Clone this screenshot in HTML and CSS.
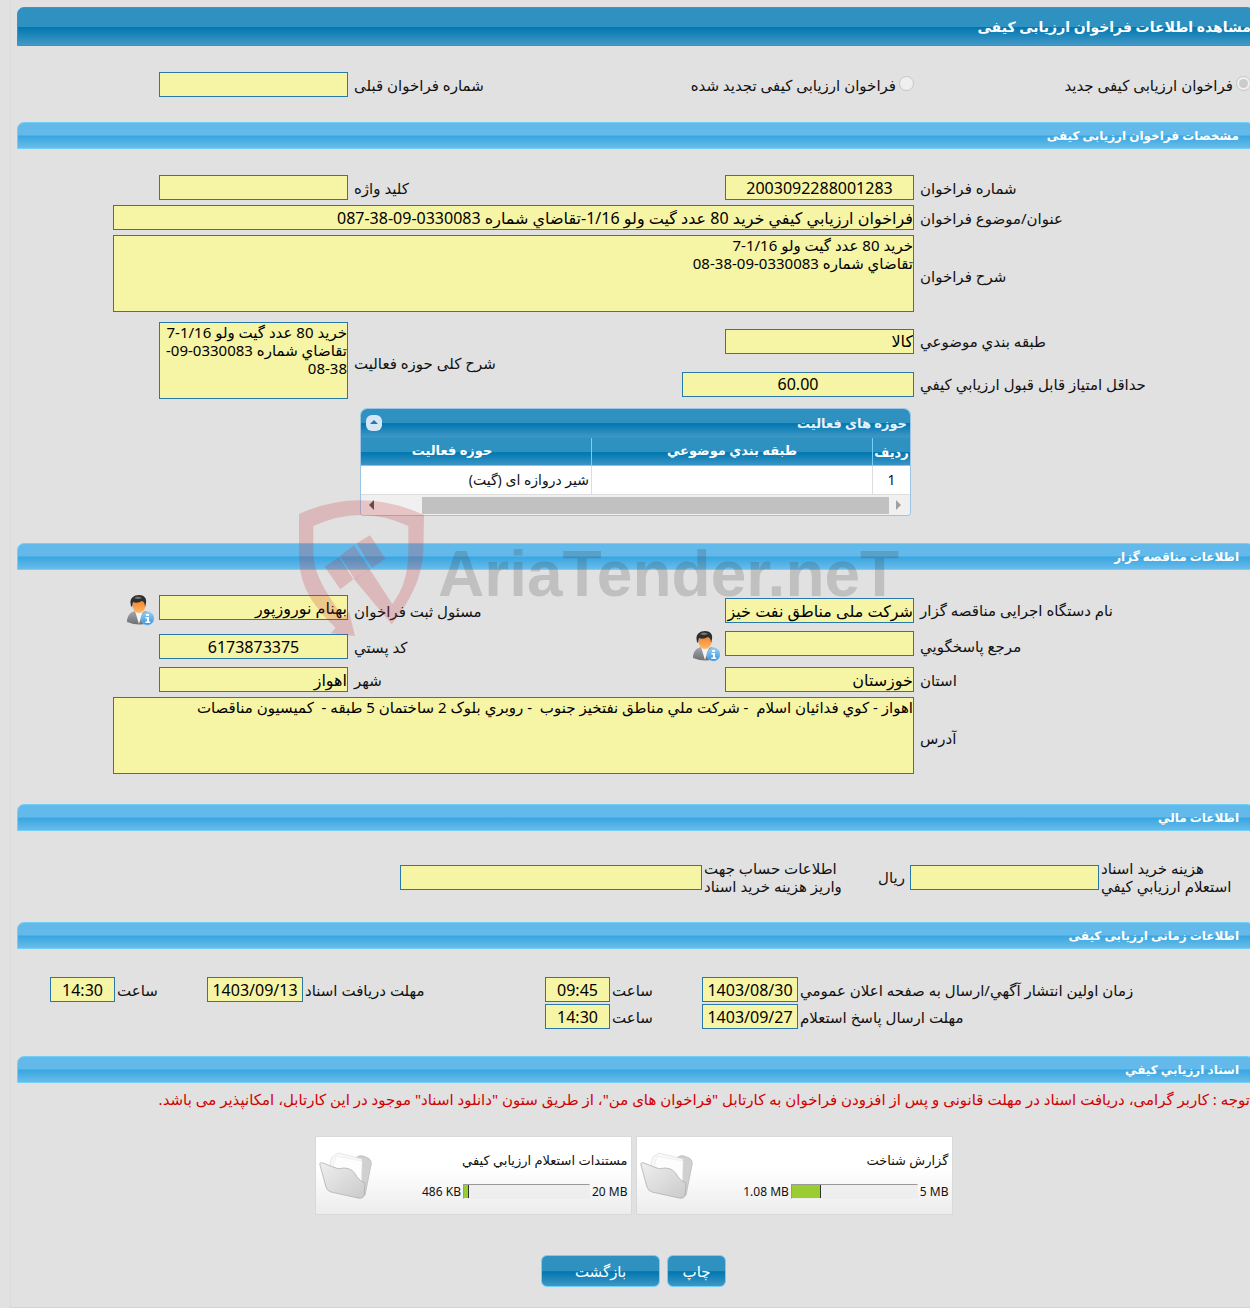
FILE: index.html
```html
<!DOCTYPE html>
<html lang="fa" dir="rtl">
<head>
<meta charset="utf-8">
<title>مشاهده اطلاعات فراخوان ارزیابی کیفی</title>
<link rel="stylesheet" href="styles.css">
</head>
<body>
<svg class="defs" aria-hidden="true">
  <defs>
    <linearGradient id="suit" x1="0" y1="0" x2="0" y2="1"><stop offset="0" stop-color="#a5a8ab"/><stop offset="1" stop-color="#6c6f73"/></linearGradient>
    <linearGradient id="face" x1="0" y1="0" x2="0" y2="1"><stop offset="0" stop-color="#f47a22"/><stop offset="1" stop-color="#ffb765"/></linearGradient>
    <linearGradient id="info" x1="0" y1="0" x2="0" y2="1"><stop offset="0" stop-color="#9cd0f5"/><stop offset="1" stop-color="#2b93e6"/></linearGradient>
    <linearGradient id="front" x1="0" y1="0" x2="1" y2="1"><stop offset="0" stop-color="#efefef"/><stop offset="1" stop-color="#cacaca"/></linearGradient>
    <symbol id="person" viewBox="0 0 28 31">
      <path d="M1 27C1 20 5 17 9 16L14 19 19 16C24 17 26 20 26 27Q14 32 1 27Z" fill="url(#suit)"/>
      <path d="M9 16L13 29 17 16Z" fill="#f4f4f4"/>
      <ellipse cx="13" cy="10.500" rx="6.500" ry="7.500" fill="url(#face)"/>
      <path d="M4.500 8C4 3 8 0 13 0 18 0 21 3 20 8L19 12Q19 7 16 6 11 9 7 7L6 12Q4.500 11 4.500 8Z" fill="#2e2e2e"/>
      <path d="M8 3Q12 0 16 3Q12 5 8 3Z" fill="#777"/>
      <circle cx="21.500" cy="23.500" r="6.500" fill="url(#info)" stroke="#82bdea" stroke-width=".6"/>
      <path d="M20 19h3v2h-3zM19.500 22H23v4.500h1.300V28h-5v-1.500H21v-3h-1.500z" fill="#fff"/>
    </symbol>
    <symbol id="folder" viewBox="0 0 54 48">
      <path d="M30 12L38 5Q41 3 44 4L49 6Q53 8 52 13L46 43 40 46Z" fill="#d0d0d0" stroke="#b5b5b5" stroke-width=".7"/>
      <path d="M11 12L13 5 19 1 43 7 42 34 16 28Z" fill="#f9f9f9" stroke="#dcdcdc" stroke-width=".7"/>
      <path d="M14 14L17 4 43 9 42 36Z" fill="#fdfdfd" stroke="#e2e2e2" stroke-width=".5"/>
      <path d="M1 13Q0 10 4 11L14 15Q19 18 25 16 34 16 38 25 41 29 46 31L45 44Q44 47 39 46L12 40Q8 39 7 35Z" fill="url(#front)" stroke="#b0b0b0" stroke-width=".8"/>
    </symbol>
  </defs>
</svg>

<main class="panel">
  <h1 class="title-bar">مشاهده اطلاعات فراخوان ارزیابی کیفی</h1>

  <form class="form">
    <div class="kind">
      <label class="radio"><input type="radio" name="kind" checked disabled><span>فراخوان ارزیابی کیفی جدید</span></label>
      <label class="radio"><input type="radio" name="kind" disabled><span>فراخوان ارزیابی کیفی تجدید شده</span></label>
      <label class="lbl" for="prev">شماره فراخوان قبلی</label>
      <input class="box std" id="prev" readonly>
    </div>

    <h2 class="bar">مشخصات فراخوان ارزیابی کیفی</h2>
    <div class="fields">
      <label class="lbl" for="num">شماره فراخوان</label>
      <input class="box std num" id="num" value="2003092288001283" readonly>
      <label class="lbl" for="key">کلید واژه</label>
      <input class="box std" id="key" readonly>

      <label class="lbl" for="subject">عنوان/موضوع فراخوان</label>
      <input class="box long" id="subject" value="فراخوان ارزيابي کيفي خريد 80 عدد گيت ولو 1/16-تقاضاي شماره 0330083-09-38-087" readonly>

      <label class="lbl tall" for="desc">شرح فراخوان</label>
      <textarea class="box long area" id="desc" readonly>خريد 80 عدد گيت ولو 1/16-7
تقاضاي شماره 0330083-09-38-08</textarea>

      <label class="lbl mid" for="cat">طبقه بندي موضوعي</label>
      <input class="box std" id="cat" value="کالا" readonly>
      <label class="lbl two" for="scope">شرح کلی حوزه فعالیت</label>
      <textarea class="box std area two" id="scope" readonly>خريد 80 عدد گيت ولو 1/16-7
تقاضاي شماره 0330083-09-38-08</textarea>

      <label class="lbl mid" for="score">حداقل امتیاز قابل قبول ارزيابي کیفي</label>
      <input class="box score num" id="score" value="60.00" readonly>

      <section class="activity">
        <header class="activity-head">
          <span>حوزه های فعالیت</span>
          <button class="fold" type="button" aria-label="بستن"><svg width="16" height="16" viewBox="0 0 16 16"><rect width="16" height="16" rx="6" fill="#d7e6f6"/><path d="M4 9L8 5l4 4z" fill="#1c7bb0"/></svg></button>
        </header>
        <table>
          <thead><tr><th class="c-row">ردیف</th><th class="c-cat">طبقه بندي موضوعي</th><th class="c-act">حوزه فعالیت</th></tr></thead>
          <tbody><tr><td class="center">1</td><td></td><td>شیر دروازه ای (گیت)</td></tr></tbody>
        </table>
        <div class="scroll">
          <svg width="6" height="10" viewBox="0 0 6 10"><path d="M0 0l5 5-5 5z" fill="#a0a0a0"/></svg>
          <span class="thumb"></span>
          <svg width="6" height="10" viewBox="0 0 6 10"><path d="M6 0L1 5l5 5z" fill="#505050"/></svg>
        </div>
      </section>
    </div>

    <h2 class="bar">اطلاعات مناقصه گزار</h2>
    <div class="fields contact">
      <label class="lbl person-row" for="org">نام دستگاه اجرایی مناقصه گزار</label>
      <input class="box std" id="org" value="شرکت ملی مناطق نفت خیز جنوب" readonly>
      <label class="lbl" for="reg">مسئول ثبت فراخوان</label>
      <div class="with-icon"><input class="box std" id="reg" value="بهنام نوروزپور" readonly><svg class="person"><use href="#person"/></svg></div>

      <label class="lbl person-row" for="ref">مرجع پاسخگويي</label>
      <div class="with-icon"><input class="box std" id="ref" readonly><svg class="person"><use href="#person"/></svg></div>
      <label class="lbl" for="zip">کد پستي</label>
      <input class="box std num" id="zip" value="6173873375" readonly>

      <label class="lbl" for="prov">استان</label>
      <input class="box std" id="prov" value="خوزستان" readonly>
      <label class="lbl" for="city">شهر</label>
      <input class="box std" id="city" value="اهواز" readonly>

      <label class="lbl tall" for="addr">آدرس</label>
      <textarea class="box long area" id="addr" readonly>اهواز - کوي فدائيان اسلام  - شرکت ملي مناطق نفتخيز جنوب  - روبري بلوک 2 ساختمان 5 طبقه -  کميسيون مناقصات</textarea>
    </div>

    <h2 class="bar">اطلاعات مالي</h2>
    <div class="money">
      <label for="fee"><span>هزينه خريد اسناد</span>استعلام ارزيابي کيفي</label>
      <input class="box" id="fee" readonly>
      <span class="unit">ریال</span>
      <label for="acc"><span>اطلاعات حساب جهت</span>واريز هزينه خريد اسناد</label>
      <input class="box" id="acc" readonly>
    </div>

    <h2 class="bar">اطلاعات زمانی ارزیابی کیفی</h2>
    <div class="times">
      <label for="d1">زمان اولین انتشار آگهي/ارسال به صفحه اعلان عمومي</label>
      <input class="box num" id="d1" value="1403/08/30" readonly>
      <label for="t1">ساعت</label>
      <input class="box num" id="t1" value="09:45" readonly>
      <label for="d2">مهلت دریافت اسناد</label>
      <input class="box num" id="d2" value="1403/09/13" readonly>
      <label for="t2">ساعت</label>
      <input class="box num" id="t2" value="14:30" readonly>
      <label for="d3">مهلت ارسال پاسخ استعلام</label>
      <input class="box num" id="d3" value="1403/09/27" readonly>
      <label for="t3">ساعت</label>
      <input class="box num" id="t3" value="14:30" readonly>
    </div>

    <h2 class="bar">اسناد ارزيابي کيفي</h2>
    <p class="note">توجه : کاربر گرامی، دریافت اسناد در مهلت قانونی و پس از افزودن فراخوان به کارتابل "فراخوان های من"، از طریق ستون "دانلود اسناد" موجود در این کارتابل، امکانپذیر می باشد.</p>

    <div class="cards">
      <article class="card">
        <div class="card-text">
          <span>گزارش شناخت</span>
          <div class="usage"><bdi>5 MB</bdi><div class="meter"><div class="used" style="width:23%"></div></div><bdi>1.08 MB</bdi></div>
        </div>
        <svg class="folder"><use href="#folder"/></svg>
      </article>
      <article class="card">
        <div class="card-text">
          <span>مستندات استعلام ارزیابي کیفي</span>
          <div class="usage"><bdi>20 MB</bdi><div class="meter"><div class="used" style="width:4%"></div></div><bdi>486 KB</bdi></div>
        </div>
        <svg class="folder"><use href="#folder"/></svg>
      </article>
    </div>

    <div class="actions">
      <button class="btn" type="button">چاپ</button>
      <button class="btn wide" type="button">بازگشت</button>
    </div>
  </form>
</main>

<div class="watermark" dir="ltr">
  <svg width="127" height="141" viewBox="18 24 381 423">
    <path d="M18 72Q204 -12 393 75L391 180C388 265 350 335 296 403L183 268 230 238 298 342C330 300 346 250 346 180V108Q204 42 61 108V190C62 260 110 320 150 382L168 366 186 438 113 430 128 413C50 340 18 280 18 190Z"/>
    <path d="M191 160l40-24 46 70-40 28zM141 198l42-32 48 72-46 30zM95 230l43-29 43 67-39 30z"/>
  </svg>
  <span>AriaTender.neT</span>
</div>
</body>
</html>
```
FILE: styles.css
```css
* { box-sizing: border-box; }

body {
  margin: 0;
  position: relative;
  overflow-x: hidden;
  background: #e1e1e1;
  color: #111;
  font: 15px/18px "Noto Sans", "DejaVu Sans", sans-serif;
}

.defs { position: absolute; width: 0; height: 0; }

.panel {
  margin: 0 -4px 0 10px;
  padding: 7px 0 20px 6px;
  border-left: 1px solid #dadada;
  border-bottom: 1px solid #d4d4d4;
}

h1, h2, p { margin: 0; }

.title-bar {
  height: 39px;
  padding: 0 2px;
  border: 1px solid #3594d0;
  border-radius: 7px 7px 0 0;
  background: linear-gradient(#2f91bf 0 50%, #0077b0 52%, #4299c6);
  color: #fff;
  font-size: 14px;
  line-height: 37px;
}

.bar {
  height: 27px;
  padding: 0 14px;
  border: 1px solid #72d0f8;
  border-radius: 7px 7px 0 0;
  background: linear-gradient(#63baea 0 48%, #38a6e1 52%, #68bcea);
  color: #fff;
  font-size: 12px;
  line-height: 26px;
}

.box {
  height: 25px;
  width: 100%;
  min-width: 0;
  margin: 0;
  padding: 0;
  border: 1px solid #2878aa;
  border-radius: 0;
  background: #f6f4a5;
  color: #000;
  font: 16px/22px "Noto Sans", "DejaVu Sans", sans-serif;
  outline: none;
}

.num { text-align: center; }
.std { width: 189px; }
.score { width: 232px; }
.long { width: 801px; grid-column: 2 / -1; }

.area {
  height: 77px;
  align-self: start;
  resize: none;
  overflow: hidden;
  font-size: 15px;
  line-height: 18px;
}

.lbl { padding-left: 6px; text-align: left; }

.kind, .fields {
  display: grid;
  grid-template-columns: 340fr 414fr 152fr 331fr;
  align-items: center;
}

.kind { padding: 26px 0 25px; }
.radio { display: flex; gap: 3px; }
.radio input { width: 15px; height: 15px; margin: 0; }
.kind .radio:first-child { padding-right: 3px; }

.fields { padding: 26px 0 27px; row-gap: 5px; }
.fields.contact { padding: 25px 0; }
.tall { line-height: 82px; }
.mid { line-height: 38px; }
.two { grid-row: 4 / span 2; grid-column: 4; }
.lbl.two { grid-column: 3; }
.person-row { line-height: 31px; }

.activity {
  grid-column: 2 / -1;
  width: 551px;
  margin-right: 3px;
  border: 1px solid #9dc4e2;
  border-radius: 7px 7px 3px 3px;
  overflow: hidden;
  background: #f0f0f0;
}

.activity-head {
  display: flex;
  justify-content: space-between;
  align-items: center;
  height: 29px;
  padding: 0 3px 0 5px;
  border-bottom: 1px solid #3594d0;
  background: linear-gradient(#2f91bf 0 50%, #0077b0 52%, #3f97c6);
  color: #e8f2fa;
  font-size: 13px;
  font-weight: bold;
}

.fold { display: flex; padding: 0; border: 0; background: none; }

table { width: 100%; border-collapse: separate; border-spacing: 0; table-layout: fixed; background: #fff; }
thead { background: linear-gradient(#2f91bf 0 50%, #0077b0 52%, #3f97c6); color: #fff; }
th { height: 28px; padding: 0; border-bottom: 1px solid #72d0f8; border-left: 1px solid #72d0f8; font-size: 13px; }
td { height: 29px; padding: 0 2px; border-left: 1px solid #ddd; border-bottom: 1px solid #ddd; font-size: 14px; }
th:last-child, td:last-child { border-left: 0; }
.c-row { width: 38px; }
.c-cat { width: 281px; }
.c-cat, .c-act { padding-bottom: 3px; }
th.c-act { padding-right: 48px; }
td.center { text-align: center; }

.scroll { display: flex; align-items: center; gap: 7px; height: 20px; padding: 0 8px 0 7px; }
.thumb { flex: 1; height: 17px; margin-left: 41px; background: #c1c1c1; }

.with-icon { display: flex; align-items: flex-start; gap: 5px; }
.person { width: 28px; height: 31px; }

.money {
  display: grid;
  grid-template-columns: 155fr 189fr 68fr 140fr 302fr 383fr;
  align-items: center;
  padding: 28px 0 27px;
}
.money label { padding-left: 2px; justify-self: end; text-align: center; white-space: nowrap; }
.money label span { display: block; text-align: left; }
.unit { padding-right: 5px; }

.times {
  display: grid;
  grid-template-columns: 456fr 96fr 92fr 65fr 242fr 96fr 92fr 65fr 33fr;
  align-items: center;
  row-gap: 2px;
  padding: 28px 0 27px;
}
.times label { padding-left: 2px; text-align: left; white-space: nowrap; }
.times label[for="d3"] { grid-column: 1; }

.note { padding: 7px 4px 0 0; color: #d40000; white-space: nowrap; }

.cards { display: flex; justify-content: center; gap: 4px; padding: 28px 2px 0 0; margin-left: -2px; }
.card {
  display: flex;
  justify-content: space-between;
  align-items: center;
  width: 317px;
  height: 79px;
  padding: 0 3px;
  border: 1px solid #d9d9d9;
  background: linear-gradient(#fff 40%, #ececec);
  font-size: 13px;
}
.card-text { display: grid; gap: 14px; }
.usage { display: flex; align-items: center; gap: 2px; font-size: 12px; }
.meter { width: 127px; height: 15px; border: 1px solid #eee; border-top-color: #999; border-left-color: #999; background: #eee; direction: ltr; }
.used { height: 13px; background: #9acd32; border-right: 1px solid #333; }
.folder { width: 54px; height: 48px; }

.actions { display: flex; justify-content: center; gap: 7px; padding: 40px 4px 0 0; }
.btn {
  width: 59px;
  height: 32px;
  padding: 0;
  border: 1px solid #72d0f8;
  border-radius: 6px;
  background: linear-gradient(#2f91bf 0 50%, #0077b0 52%, #3f97c6);
  color: #fff;
  font: inherit;
}
.btn.wide { width: 119px; }

.watermark {
  position: absolute;
  top: 498px;
  left: 299px;
  display: flex;
  gap: 12px;
  pointer-events: none;
  color: rgba(60, 60, 60, .2);
  font: bold 64px/152px "Liberation Sans", sans-serif;
}
.watermark svg { flex: none; fill: rgba(200, 40, 50, .22); }
```
